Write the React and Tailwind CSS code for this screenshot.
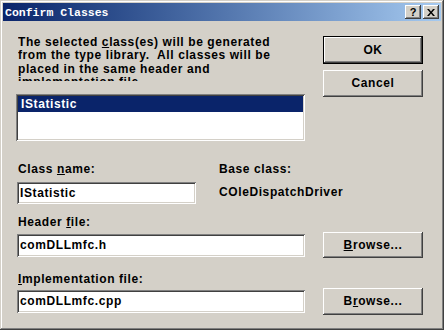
const raised = "shadow-[inset_-1px_-1px_#404040,inset_1px_1px_#ffffff,inset_-2px_-2px_#808080,inset_2px_2px_#d4d0c8]";
const sunken = "shadow-[inset_1px_1px_#808080,inset_-1px_-1px_#ffffff,inset_2px_2px_#404040,inset_-2px_-2px_#d4d0c8]";

function Button({ children, isDefault, className = "" }) {
    if (isDefault) {
        return (
            <div className={"border border-black " + className}>
                <div className={"h-full flex items-center justify-center " + raised}>{children}</div>
            </div>
        );
    }
    return <div className={"flex items-center justify-center " + raised + " " + className}>{children}</div>;
}

function Edit({ value, className = "" }) {
    return (
        <div className={"bg-white flex items-center pl-[3px] " + sunken + " " + className}>
            {value}
        </div>
    );
}

export default function App() {
    return (
        <div className="w-[444px] h-[330px] bg-[#d4d0c8] p-[3px] flex flex-col font-['Liberation_Sans',Arial,sans-serif] text-[12px] font-bold tracking-[0.6px] leading-[13px] text-black shadow-[inset_-1px_-1px_#404040,inset_1px_1px_#d4d0c8,inset_-2px_-2px_#808080,inset_2px_2px_#ffffff]">
            <div className="h-[18px] flex items-center bg-linear-to-r from-[#0a246a] to-[#a6caf0] pl-[2px] pr-[2px]">
                <span className="font-['Liberation_Mono',monospace] text-[11.5px] tracking-normal text-white">Confirm Classes</span>
                <div className="ml-auto flex gap-[2px]">
                    <div className={"w-[16px] h-[14px] bg-[#d4d0c8] flex items-center justify-center text-[11px] tracking-normal " + raised}>?</div>
                    <div className={"w-[16px] h-[14px] bg-[#d4d0c8] flex items-center justify-center " + raised}>
                        <svg width="8" height="7" viewBox="0 0 8 7">
                            <path d="M0 0h2l2 2.5 2-2.5h2l-3 3.5 3 3.5h-2l-2-2.5-2 2.5h-2l3-3.5z" fill="#000" />
                        </svg>
                    </div>
                </div>
            </div>

            <div className="flex pl-[13px] pt-[15px]">
                <div className="w-[289px] flex flex-col">
                    {/* static text is taller than its box, the last line gets cut off */}
                    <div className="ml-[2px] h-[45px] overflow-hidden leading-[13.3px]">
                        The selected <u>c</u>lass(es) will be generated<br />
                        from the type library.&nbsp; All classes will be<br />
                        placed in the same header and<br />
                        implementation file.
                    </div>
                    <div className={"mt-[13px] h-[47px] bg-white p-[2px] " + sunken}>
                        <div className="h-[16px] bg-[#0a246a] text-white flex items-center pl-[3px]">IStatistic</div>
                    </div>
                </div>
                <div className="ml-[18px] w-[100px] flex flex-col gap-[6px]">
                    <Button isDefault className="h-[28px]">OK</Button>
                    <Button className="h-[27px]">Cancel</Button>
                </div>
            </div>

            <div className="pl-[13px] mt-[22px] flex">
                <div className="w-[180px] flex flex-col">
                    <div className="ml-[2px]">Class <u>n</u>ame:</div>
                    <Edit value="IStatistic" className="mt-[6px] ml-[1px] h-[22px]" />
                </div>
                <div className="ml-[23px] flex flex-col">
                    <div>Base class:</div>
                    <div className="mt-[10px]">COleDispatchDriver</div>
                </div>
            </div>

            <div className="pl-[13px] mt-[12px] ml-[2px]">Header <u>f</u>ile:</div>
            <div className="pl-[13px] mt-[3px] flex items-center">
                <Edit value="comDLLmfc.h" className="ml-[1px] w-[288px] h-[23px]" />
                <Button className="ml-[18px] w-[100px] h-[26px]"><u>B</u>rowse...</Button>
            </div>

            <div className="pl-[13px] mt-[15px] ml-[2px]"><u>I</u>mplementation file:</div>
            <div className="pl-[13px] mt-[2px] flex items-center">
                <Edit value="comDLLmfc.cpp" className="ml-[1px] w-[288px] h-[23px]" />
                <Button className="ml-[18px] w-[100px] h-[27px]">B<u>r</u>owse...</Button>
            </div>
        </div>
    );
}
